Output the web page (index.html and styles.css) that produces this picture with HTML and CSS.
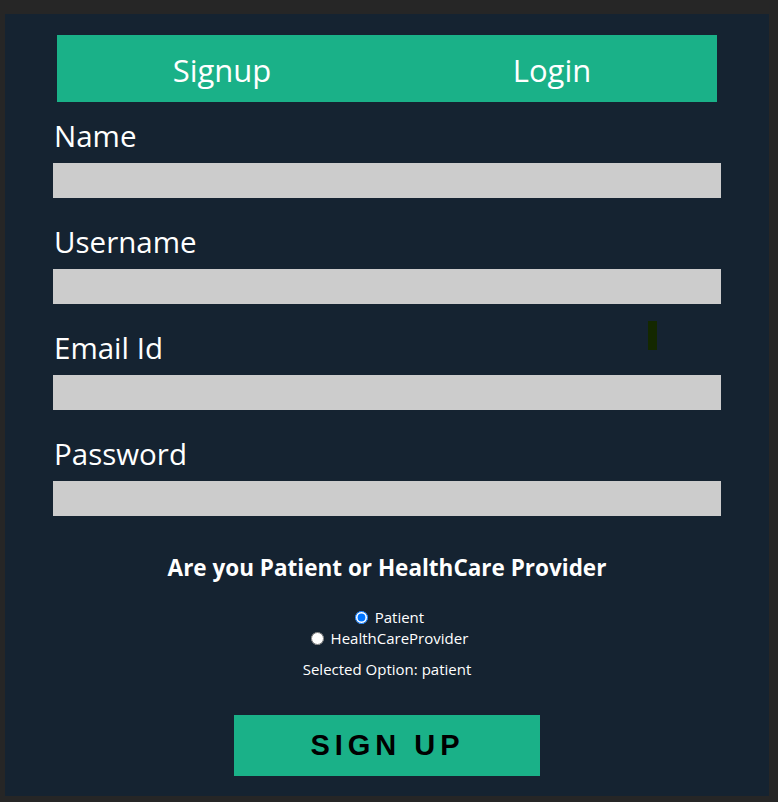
FILE: index.html
```html
<!DOCTYPE html>
<html>
<head>
<meta charset="utf-8">
<link rel="stylesheet" href="styles.css">
</head>
<body>
<div class="panel">
  <div class="tabs">
    <div class="tab">Signup</div>
    <div class="tab">Login</div>
  </div>
  <form class="form">
    <div class="field">
      <label class="label">Name</label>
      <input class="input" type="text">
    </div>
    <div class="field">
      <label class="label">Username</label>
      <input class="input" type="text">
    </div>
    <div class="field">
      <label class="label">Email Id</label>
      <input class="input" type="text">
      <span class="marker"></span>
    </div>
    <div class="field">
      <label class="label">Password</label>
      <input class="input" type="password">
    </div>
    <h3 class="question">Are you Patient or HealthCare Provider</h3>
    <div class="radios">
      <label class="radio"><input type="radio" name="role" checked> Patient</label>
      <label class="radio"><input type="radio" name="role"> HealthCareProvider</label>
    </div>
    <p class="selected">Selected Option: patient</p>
    <button type="button" class="submit">SIGN UP</button>
  </form>
</div>
</body>
</html>
```
FILE: styles.css
```css
html, body {
  margin: 0;
  padding: 0;
  background: #262626;
}
body {
  padding: 14px 9px 6px 5px;
  font-family: "Open Sans", "Noto Sans", sans-serif;
  color: #ffffff;
}
.panel {
  background: #152331;
  height: 782px;
  box-sizing: border-box;
  padding: 21px 48px 0 48px;
}
.tabs {
  display: flex;
  margin: 0 4px;
  height: 67px;
  background: #1ab188;
}
.tab {
  flex: 1;
  display: flex;
  align-items: center;
  justify-content: center;
  font-size: 31px;
  padding-top: 3px;
  color: #ffffff;
}
.form {
  display: flex;
  flex-direction: column;
}
.field {
  position: relative;
  display: flex;
  flex-direction: column;
}
.label {
  font-size: 29.5px;
  line-height: 38px;
  margin-top: 25px;
  margin-bottom: 8px;
  padding-left: 1px;
}
.field:first-child .label {
  margin-top: 15px;
}
.input {
  height: 35px;
  border: 0;
  margin: 0;
  padding: 0;
  background: #cccccc;
  width: 100%;
}
.marker {
  position: absolute;
  left: 595px;
  top: 17px;
  width: 9px;
  height: 29px;
  background: #142800;
}
.question {
  margin: 37px 0 0;
  text-align: center;
  font-size: 22.5px;
  font-weight: 700;
  line-height: 30px;
}
.radios {
  margin-top: 24px;
  display: flex;
  flex-direction: column;
  align-items: center;
  font-size: 15px;
  line-height: 21px;
}
.radio input {
  margin: 0 3px 0 5px;
  width: 13px;
  height: 13px;
  vertical-align: -1px;
}
.selected {
  text-align: center;
  font-size: 15px;
  margin: 10px 0 0;
  line-height: 20px;
}
.submit {
  align-self: center;
  margin-top: 36px;
  width: 306px;
  height: 61px;
  border: 0;
  background: #1ab188;
  color: #000000;
  font-family: "Liberation Sans", Arial, sans-serif;
  font-weight: 700;
  font-size: 29px;
  letter-spacing: 5px;
  padding: 0 0 0 1px;
}
```
